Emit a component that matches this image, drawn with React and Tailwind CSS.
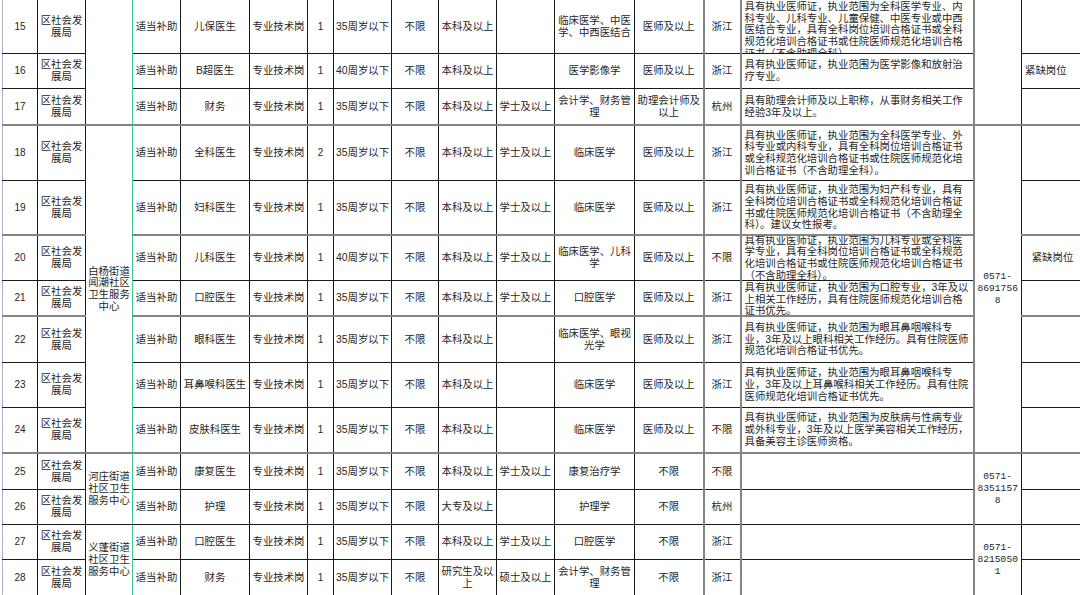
const COLS = [35, 48, 47, 48, 69, 58, 26, 58, 47, 58, 58, 80, 69, 37, 233, 48, 62];

const rows = [
  { n: 15, h: 54, post: "儿保医生", cnt: 1, age: "35周岁以下", edu: ["本科及以上"], deg: "", major: ["临床医学、中医", "学、中西医结合"], title: ["医师及以上"], hk: "浙江",
    desc: ["具有执业医师证，执业范围为全科医学专业、内", "科专业、儿科专业、儿童保健、中医专业或中西", "医结合专业，具有全科岗位培训合格证书或全科", "规范化培训合格证书或住院医师规范化培训合格", "证书（不含助理全科）。"], top: true },
  { n: 16, h: 35, post: "B超医生", cnt: 1, age: "40周岁以下", edu: ["本科及以上"], deg: "", major: ["医学影像学"], title: ["医师及以上"], hk: "浙江",
    desc: ["具有执业医师证，执业范围为医学影像和放射治", "疗专业。"], note: "紧缺岗位", noteLeft: true },
  { n: 17, h: 37, post: "财务", cnt: 1, age: "35周岁以下", edu: ["本科及以上"], deg: "学士及以上", major: ["会计学、财务管", "理"], title: ["助理会计师及", "以上"], hk: "杭州",
    desc: ["具有助理会计师及以上职称，从事财务相关工作", "经验3年及以上。"], thick: true },
  { n: 18, h: 55, post: "全科医生", cnt: 2, age: "35周岁以下", edu: ["本科及以上"], deg: "学士及以上", major: ["临床医学"], title: ["医师及以上"], hk: "浙江",
    desc: ["具有执业医师证，执业范围为全科医学专业、外", "科专业或内科专业，具有全科岗位培训合格证书", "或全科规范化培训合格证书或住院医师规范化培", "训合格证书（不含助理全科）。"] },
  { n: 19, h: 55, post: "妇科医生", cnt: 1, age: "35周岁以下", edu: ["本科及以上"], deg: "学士及以上", major: ["临床医学"], title: ["医师及以上"], hk: "浙江",
    desc: ["具有执业医师证，执业范围为妇产科专业，具有", "全科岗位培训合格证书或全科规范化培训合格证", "书或住院医师规范化培训合格证书（不含助理全", "科）。建议女性报考。"], thick: true },
  { n: 20, h: 45, post: "儿科医生", cnt: 1, age: "40周岁以下", edu: ["本科及以上"], deg: "学士及以上", major: ["临床医学、儿科", "学"], title: ["医师及以上"], hk: "不限",
    desc: ["具有执业医师证，执业范围为儿科专业或全科医", "学专业，具有全科岗位培训合格证书或全科规范", "化培训合格证书或住院医师规范化培训合格证书", "（不含助理全科）。"], note: "紧缺岗位" },
  { n: 21, h: 36, post: "口腔医生", cnt: 1, age: "35周岁以下", edu: ["本科及以上"], deg: "学士及以上", major: ["口腔医学"], title: ["医师及以上"], hk: "浙江",
    desc: ["具有执业医师证，执业范围为口腔专业，3年及以", "上相关工作经历，具有住院医师规范化培训合格", "证书优先。"], thick: true, top: true },
  { n: 22, h: 46, post: "眼科医生", cnt: 1, age: "35周岁以下", edu: ["本科及以上"], deg: "", major: ["临床医学、眼视", "光学"], title: ["医师及以上"], hk: "浙江",
    desc: ["具有执业医师证，执业范围为眼耳鼻咽喉科专", "业，3年及以上眼科相关工作经历。具有住院医师", "规范化培训合格证书优先。"] },
  { n: 23, h: 45, post: "耳鼻喉科医生", cnt: 1, age: "35周岁以下", edu: ["本科及以上"], deg: "", major: ["临床医学"], title: ["医师及以上"], hk: "浙江",
    desc: ["具有执业医师证，执业范围为眼耳鼻咽喉科专", "业，3年及以上耳鼻喉科相关工作经历。具有住院", "医师规范化培训合格证书优先。"] },
  { n: 24, h: 46, post: "皮肤科医生", cnt: 1, age: "35周岁以下", edu: ["本科及以上"], deg: "", major: ["临床医学"], title: ["医师及以上"], hk: "不限",
    desc: ["具有执业医师证，执业范围为皮肤病与性病专业", "或外科专业，3年及以上医学美容相关工作经历，", "具备美容主诊医师资格。"], thick: true },
  { n: 25, h: 36, post: "康复医生", cnt: 1, age: "35周岁以下", edu: ["本科及以上"], deg: "学士及以上", major: ["康复治疗学"], title: ["不限"], hk: "不限", desc: [] },
  { n: 26, h: 35, post: "护理", cnt: 1, age: "35周岁以下", edu: ["大专及以上"], deg: "", major: ["护理学"], title: ["不限"], hk: "杭州", desc: [] },
  { n: 27, h: 35, post: "口腔医生", cnt: 1, age: "35周岁以下", edu: ["本科及以上"], deg: "学士及以上", major: ["口腔医学"], title: ["不限"], hk: "浙江", desc: [] },
  { n: 28, h: 36, post: "财务", cnt: 1, age: "35周岁以下", edu: ["研究生及以", "上"], deg: "硕士及以上", major: ["会计学、财务管", "理"], title: ["不限"], hk: "浙江", desc: [] },
];

// merged cells in the unit column and the phone column, keyed by starting row index
const groups = {
  0: { span: 3, unit: [], phone: [] },
  3: { span: 7, unit: ["白杨街道", "闻潮社区", "卫生服务", "中心"], phone: ["0571-", "8691756", "8"] },
  10: { span: 2, unit: ["河庄街道", "社区卫生", "服务中心"], phone: ["0571-", "8351157", "8"] },
  12: { span: 2, unit: ["义蓬街道", "社区卫生", "服务中心"], phone: ["0571-", "8215050", "1"] },
};

const base = "border border-[#1a1a1a] p-0 align-middle";
const green = "border-r-[#3dcb93]";
const greenL = "border-l-[#3dcb93]";
const grayL = "border-l-2 border-l-[#858585]";
const grayB = "border-b-2 border-b-[#858585]";

const inner = (r) => r.h - (r.thick ? 2 : 1);

function Lines({ lines, left }) {
  return (
    <div className={left ? "text-left" : "text-center"}>
      {lines.map((l, i) => (
        <div key={i} className="whitespace-nowrap">{l}</div>
      ))}
    </div>
  );
}

function Td({ children, cls = "", rowSpan, h, left, top }) {
  return (
    <td rowSpan={rowSpan} className={`${base} ${cls}`}>
      <div
        className={`flex flex-col overflow-hidden ${top ? "justify-start pt-px" : "justify-center"} ${left ? "items-start pl-[3px]" : "items-center"}`}
        style={{ height: h }}
      >
        {children}
      </div>
    </td>
  );
}

export default function App() {
  return (
    <div className="w-[1080px] h-[595px] overflow-hidden bg-white">
      <table
        className="ml-[2px] -mt-px table-fixed border-collapse w-[1064px] text-[10.4px] leading-[11.7px] text-[#262626]"
        style={{ fontFamily: '"Liberation Sans", "Noto Sans CJK SC", sans-serif' }}
      >
        <colgroup>
          {COLS.map((w, i) => (
            <col key={i} style={{ width: w }} />
          ))}
        </colgroup>
        <tbody>
          {rows.map((r, i) => {
            const g = groups[i];
            const bt = r.thick ? grayB : "";
            const h = inner(r);
            let gh = 0;
            if (g) for (let k = i; k < i + g.span; k++) gh += inner(rows[k]);
            const gb = g && rows[i + g.span - 1].thick ? grayB : "";
            return (
              <tr key={r.n}>
                <Td h={h} cls={`${bt} border-l-[#a7b0c8]`}>
                  <span className="text-[10px]">{r.n}</span>
                </Td>
                <Td h={h} cls={bt}>
                  <Lines lines={["区社会发", "展局"]} />
                </Td>
                {g && (
                  <Td rowSpan={g.span} h={gh - 2} cls={`${gb} ${green}`}>
                    <Lines lines={g.unit} />
                  </Td>
                )}
                <Td h={h} cls={`${bt} ${greenL}`}>适当补助</Td>
                <Td h={h} cls={bt}>{r.post}</Td>
                <Td h={h} cls={bt}>专业技术岗</Td>
                <Td h={h} cls={bt}>
                  <span className="text-[10px]">{r.cnt}</span>
                </Td>
                <Td h={h} cls={bt}>
                  <span className="whitespace-nowrap">{r.age}</span>
                </Td>
                <Td h={h} cls={bt}>不限</Td>
                <Td h={h} cls={bt}>
                  <Lines lines={r.edu} />
                </Td>
                <Td h={h} cls={bt}>{r.deg}</Td>
                <Td h={h} cls={bt}>
                  <Lines lines={r.major} />
                </Td>
                <Td h={h} cls={bt}>
                  <Lines lines={r.title} />
                </Td>
                <Td h={h} cls={`${bt} ${grayL}`}>{r.hk}</Td>
                <Td h={h} cls={`${bt} ${grayL}`} left top={r.top}>
                  <Lines lines={r.desc} left />
                </Td>
                {g && (
                  <Td rowSpan={g.span} h={gh - 2} cls={`${gb} ${grayL}`}>
                    <div className="text-center text-[9.6px] leading-[11.7px]" style={{ fontFamily: '"Liberation Mono", monospace' }}>
                      {g.phone.map((p, k) => (
                        <div key={k}>{p}</div>
                      ))}
                    </div>
                  </Td>
                )}
                <Td h={h} cls={bt} left={r.noteLeft}>
                  {r.note || ""}
                </Td>
              </tr>
            );
          })}
          <tr>
            {COLS.map((w, i) => (
              <td key={i} className={`${base} ${i === 3 ? greenL : ""} ${i === 2 ? green : ""}`}>
                <div className="h-[20px]" />
              </td>
            ))}
          </tr>
        </tbody>
      </table>
    </div>
  );
}
